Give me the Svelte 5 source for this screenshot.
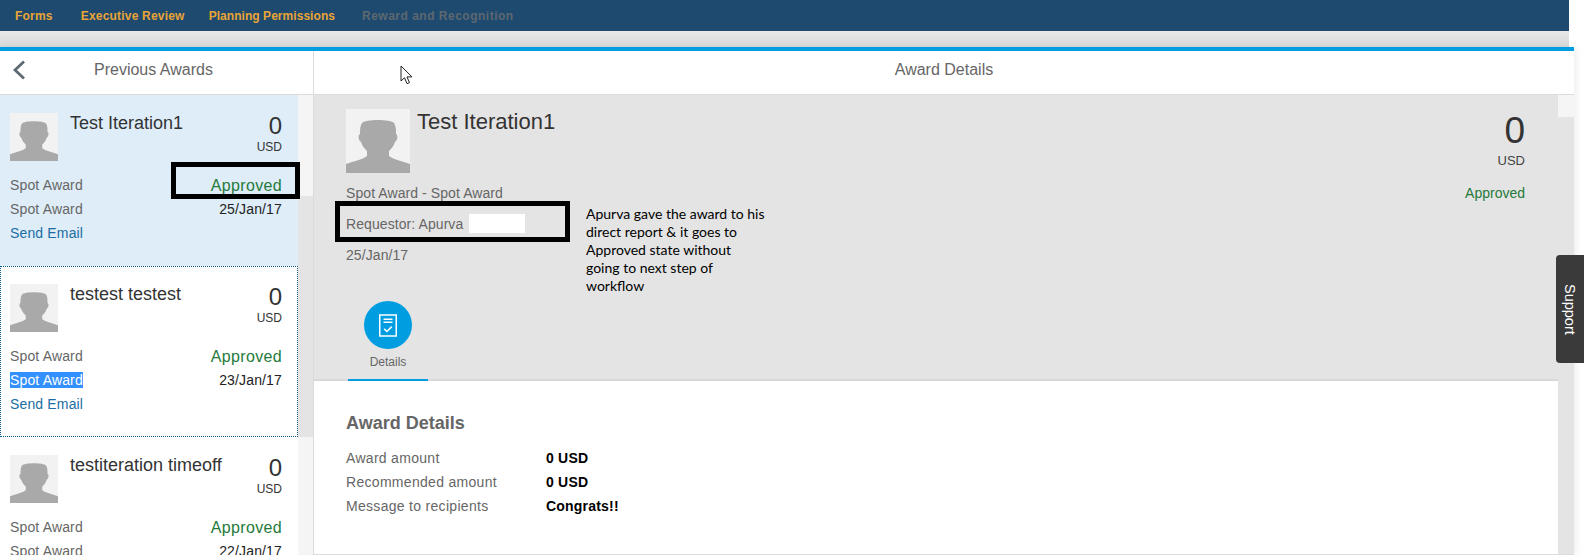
<script lang="ts">
  const items = [
    { name: 'Test Iteration1', date: '25/Jan/17', active: true },
    { name: 'testest testest', date: '23/Jan/17', focused: true, picked: true },
    { name: 'testiteration timeoff', date: '22/Jan/17' }
  ];

  const facts = [
    ['Award amount', '0 USD'],
    ['Recommended amount', '0 USD'],
    ['Message to recipients', 'Congrats!!']
  ];

  const navLinks = ['Forms', 'Executive Review', 'Planning Permissions'];
</script>

{#snippet avatar()}
  <svg class="avatar-img" viewBox="0 0 64 64" preserveAspectRatio="none">
    <rect width="64" height="64" fill="#f2f2f2" />
    <path
      fill="#a9a9a9"
      d="M16 14C19 10 45 10 48 14C50 17 50 21 50 25C52 26 52 31 49 33C48 37 45 40 43 42L43 47C47 50 52 51 58 53L64 55V64H0V55L6 53C12 51 17 50 21 47L21 42C19 40 16 37 15 33C12 31 12 26 14 25C14 21 14 17 16 14Z"
    />
  </svg>
{/snippet}

<div class="page">
  <nav class="topnav">
    {#each navLinks as link}
      <span class="nav-link">{link}</span>
    {/each}
    <span class="nav-link disabled">Reward and Recognition</span>
  </nav>
  <div class="band"></div>

  <div class="frame">
    <aside class="left">
      <header class="left-head">
        <svg class="back" viewBox="0 0 14 20" width="14" height="20">
          <path d="M12 1.500 3 10l9 8.500" fill="none" stroke="#5f6b73" stroke-width="2.800" />
        </svg>
        <span>Previous Awards</span>
      </header>
      <div class="left-body">
        <div class="list">
          {#each items as item}
            <article class="item" class:active={item.active} class:focused={item.focused}>
              <div class="item-top">
                <div class="item-avatar">{@render avatar()}</div>
                <div class="item-name">{item.name}</div>
                <div class="item-amount">
                  <div class="num">0</div>
                  <div class="cur">USD</div>
                </div>
              </div>
              <div class="item-row">
                <span class="muted">Spot Award</span>
                <span class="approved">Approved</span>
              </div>
              <div class="item-row">
                <span class="muted" class:picked={item.picked}>Spot Award</span>
                <span class="date">{item.date}</span>
              </div>
              <div class="item-row"><span class="email">Send Email</span></div>
            </article>
          {/each}
        </div>
        <div class="scroll left-scroll"><div class="thumb"></div></div>
      </div>
    </aside>

    <main class="right">
      <header class="right-head">Award Details</header>
      <div class="right-body">
        <div class="detail">
          <section class="summary">
            <div class="summary-top">
              <div class="big-avatar">{@render avatar()}</div>
              <h1>Test Iteration1</h1>
              <div class="summary-amount">
                <div class="big-num">0</div>
                <div class="big-cur">USD</div>
                <div class="big-status">Approved</div>
              </div>
            </div>
            <div class="summary-line">Spot Award - Spot Award</div>
            <div class="summary-line">Requestor: Apurva</div>
            <div class="summary-line">25/Jan/17</div>
            <div class="tab">
              <span class="tab-icon">
                <svg viewBox="0 0 24 30" width="18" height="25">
                  <path d="M1 1h22v28H1z" fill="none" stroke="#fff" stroke-width="2" />
                  <path d="M6 6.500h12M6 10.500h12" stroke="#fff" stroke-width="2" />
                  <path d="M7 19.500l3.500 3.500 6.500-6.500" fill="none" stroke="#fff" stroke-width="2" />
                </svg>
              </span>
              <span class="tab-label">Details</span>
            </div>
          </section>
          <section class="facts">
            <h2>Award Details</h2>
            <dl>
              {#each facts as [label, value]}
                <dt>{label}</dt>
                <dd>{value}</dd>
              {/each}
            </dl>
          </section>
        </div>
        <div class="scroll right-scroll"><div class="thumb"></div></div>
      </div>
    </main>
  </div>

  <!-- annotations pasted over the screenshot -->
  <div class="mark mark-status"></div>
  <div class="mark mark-requestor"></div>
  <div class="redact"></div>
  <p class="note">Apurva gave the award to his direct report &amp; it goes to Approved state without going to next step of workflow</p>
  <svg class="cursor" viewBox="0 0 13 20" width="13" height="20">
    <path d="M1 1v15l3.500-3.300 2.500 6 2.500-1-2.500-5.800h5z" fill="#fff" stroke="#222" stroke-width="1" />
  </svg>
  <div class="support"><span>Support</span></div>
</div>

<style>
  :global(body) {
    margin: 0;
    background: #fff;
  }

  .page {
    position: relative;
    width: 1584px;
    height: 555px;
    overflow: hidden;
    font-family: "Liberation Sans", Arial, sans-serif;
    color: #666;
    background: #fff;
  }

  .topnav {
    display: flex;
    align-items: center;
    gap: 24px;
    height: 31px;
    width: 1569px;
    padding-left: 15px;
    box-sizing: border-box;
    background: #1d4a6e;
  }

  .nav-link {
    font-size: 12px;
    font-weight: 700;
    letter-spacing: 0.2px;
    color: #e9a437;
  }

  .nav-link:first-child {
    margin-right: 4px;
  }

  .nav-link:nth-child(3) {
    letter-spacing: 0.05px;
  }

  .nav-link.disabled {
    margin-left: 3px;
    letter-spacing: 0.5px;
    color: #5d6870;
  }

  .band {
    width: 1569px;
    height: 16px;
    background: linear-gradient(#e8e8e8, #d8d8d8);
  }

  .frame {
    width: 1574px;
    height: 508px;
    display: flex;
    border-top: 4px solid #009de0;
    box-sizing: border-box;
    box-shadow: 3px 0 6px rgba(0, 0, 0, 0.06);
  }

  .left {
    width: 314px;
    flex-shrink: 0;
    display: flex;
    flex-direction: column;
    border-right: 1px solid #dcdcdc;
    box-sizing: border-box;
  }

  .left-head {
    height: 44px;
    flex-shrink: 0;
    box-sizing: border-box;
    border-bottom: 1px solid #dcdcdc;
    padding-bottom: 6px;
    display: flex;
    align-items: center;
    position: relative;
    font-size: 16px;
    padding-left: 94px;
    color: #666;
  }

  .back {
    position: absolute;
    left: 12px;
    top: 9px;
  }

  .left-body {
    display: flex;
    flex: 1;
    min-height: 0;
  }

  .list {
    width: 298px;
    overflow: hidden;
  }

  .item {
    height: 171px;
    box-sizing: border-box;
    padding: 18px 16px 0 10px;
    color: #666;
  }

  .item.active {
    background: #deedf8;
  }

  .item.focused {
    outline: 1px dotted #0a5a8c;
    outline-offset: -1px;
  }

  .item-top {
    display: flex;
    height: 60px;
  }

  .item-avatar {
    width: 48px;
    height: 48px;
    flex-shrink: 0;
  }

  .avatar-img {
    display: block;
    width: 100%;
    height: 100%;
  }

  .item-name {
    margin-left: 12px;
    flex: 1;
    font-size: 18px;
    line-height: 20px;
    color: #333;
  }

  .item-amount {
    text-align: right;
  }

  .num {
    font-size: 24px;
    line-height: 24px;
    margin-top: 1px;
    color: #333;
  }

  .cur {
    font-size: 12px;
    line-height: 14px;
    margin-top: 2px;
    color: #333;
  }

  .item-row {
    display: flex;
    justify-content: space-between;
    align-items: center;
    height: 24px;
    font-size: 14px;
    letter-spacing: 0.15px;
  }

  .muted {
    color: #666;
  }

  .muted.picked {
    background: #3390ff;
    color: #fff;
  }

  .approved {
    font-size: 16px;
    letter-spacing: 0.35px;
    margin-top: 2px;
    color: #257a3a;
  }

  .date {
    color: #222;
  }

  .email {
    color: #1c6ea4;
  }

  .scroll {
    flex-shrink: 0;
    background: #f5f5f5;
    position: relative;
  }

  .thumb {
    position: absolute;
    left: 0;
    right: 0;
    background: #e4e4e4;
  }

  .left-scroll {
    width: 15px;
  }

  .left-scroll .thumb {
    top: 101px;
    height: 241px;
  }

  .right {
    flex: 1;
    min-width: 0;
    display: flex;
    flex-direction: column;
  }

  .right-head {
    height: 44px;
    flex-shrink: 0;
    box-sizing: border-box;
    border-bottom: 1px solid #dcdcdc;
    padding-bottom: 6px;
    display: flex;
    align-items: center;
    justify-content: center;
    font-size: 16px;
    color: #666;
  }

  .right-body {
    flex: 1;
    display: flex;
    min-height: 0;
    border-bottom: 1px solid #dcdcdc;
  }

  .detail {
    flex: 1;
    min-width: 0;
  }

  .summary {
    height: 286px;
    box-sizing: border-box;
    padding: 14px 33px 0 32px;
    background: #e4e4e4;
    border-bottom: 2px solid #d8d8d8;
    position: relative;
  }

  .summary-top {
    display: flex;
    height: 68px;
  }

  .big-avatar {
    width: 64px;
    height: 64px;
    flex-shrink: 0;
  }

  h1 {
    margin: 1px 0 0 7px;
    flex: 1;
    font-size: 22px;
    font-weight: 400;
    line-height: 24px;
    color: #333;
  }

  .summary-amount {
    text-align: right;
  }

  .big-num {
    font-size: 37px;
    line-height: 36px;
    margin-top: 4px;
    color: #333;
  }

  .big-cur {
    font-size: 13px;
    line-height: 16px;
    margin-top: 4px;
    color: #444;
  }

  .big-status {
    font-size: 14px;
    line-height: 16px;
    margin-top: 16px;
    color: #257a3a;
  }

  .summary-line {
    height: 31px;
    display: flex;
    align-items: center;
    font-size: 14px;
    letter-spacing: 0.08px;
    color: #666;
  }

  .tab {
    position: absolute;
    left: 34px;
    bottom: -2px;
    width: 80px;
    height: 80px;
    box-sizing: border-box;
    border-bottom: 2px solid #009de0;
    display: flex;
    flex-direction: column;
    align-items: center;
  }

  .tab-icon {
    width: 48px;
    height: 48px;
    border-radius: 50%;
    background: #009de0;
    display: flex;
    align-items: center;
    justify-content: center;
  }

  .tab-label {
    margin-top: 6px;
    font-size: 12px;
    color: #666;
  }

  .facts {
    padding: 32px 32px 0;
  }

  h2 {
    margin: 0 0 13px;
    font-size: 18px;
    line-height: 20px;
    font-weight: 700;
    color: #666;
  }

  dl {
    margin: 0;
    display: grid;
    grid-template-columns: 200px 1fr;
    grid-auto-rows: 24px;
    align-items: center;
    font-size: 14px;
  }

  dt {
    color: #666;
    letter-spacing: 0.3px;
  }

  dd {
    margin: 0;
    font-weight: 700;
    letter-spacing: 0.2px;
    color: #000;
  }

  .right-scroll {
    width: 16px;
  }

  .right-scroll .thumb {
    top: 22px;
    bottom: 0;
  }

  .mark {
    position: absolute;
    box-sizing: border-box;
    border: 5px solid #000;
  }

  .mark-status {
    left: 171px;
    top: 162px;
    width: 129px;
    height: 37px;
  }

  .mark-requestor {
    left: 335px;
    top: 201px;
    width: 235px;
    height: 41px;
  }

  .redact {
    position: absolute;
    left: 469px;
    top: 214px;
    width: 56px;
    height: 19px;
    background: #fff;
  }

  .note {
    position: absolute;
    left: 586px;
    top: 205px;
    width: 181px;
    margin: 0;
    font-family: Lato, "Liberation Sans", sans-serif;
    font-size: 14px;
    line-height: 18px;
    color: #000;
  }

  .cursor {
    position: absolute;
    left: 400px;
    top: 65px;
  }

  .support {
    position: absolute;
    left: 1556px;
    top: 255px;
    width: 28px;
    height: 108px;
    box-sizing: border-box;
    background: #3a3a3a;
    border-radius: 4px 0 0 4px;
    display: flex;
    align-items: center;
    justify-content: center;
  }

  .support span {
    writing-mode: vertical-rl;
    font-size: 14.500px;
    color: #fff;
  }
</style>
